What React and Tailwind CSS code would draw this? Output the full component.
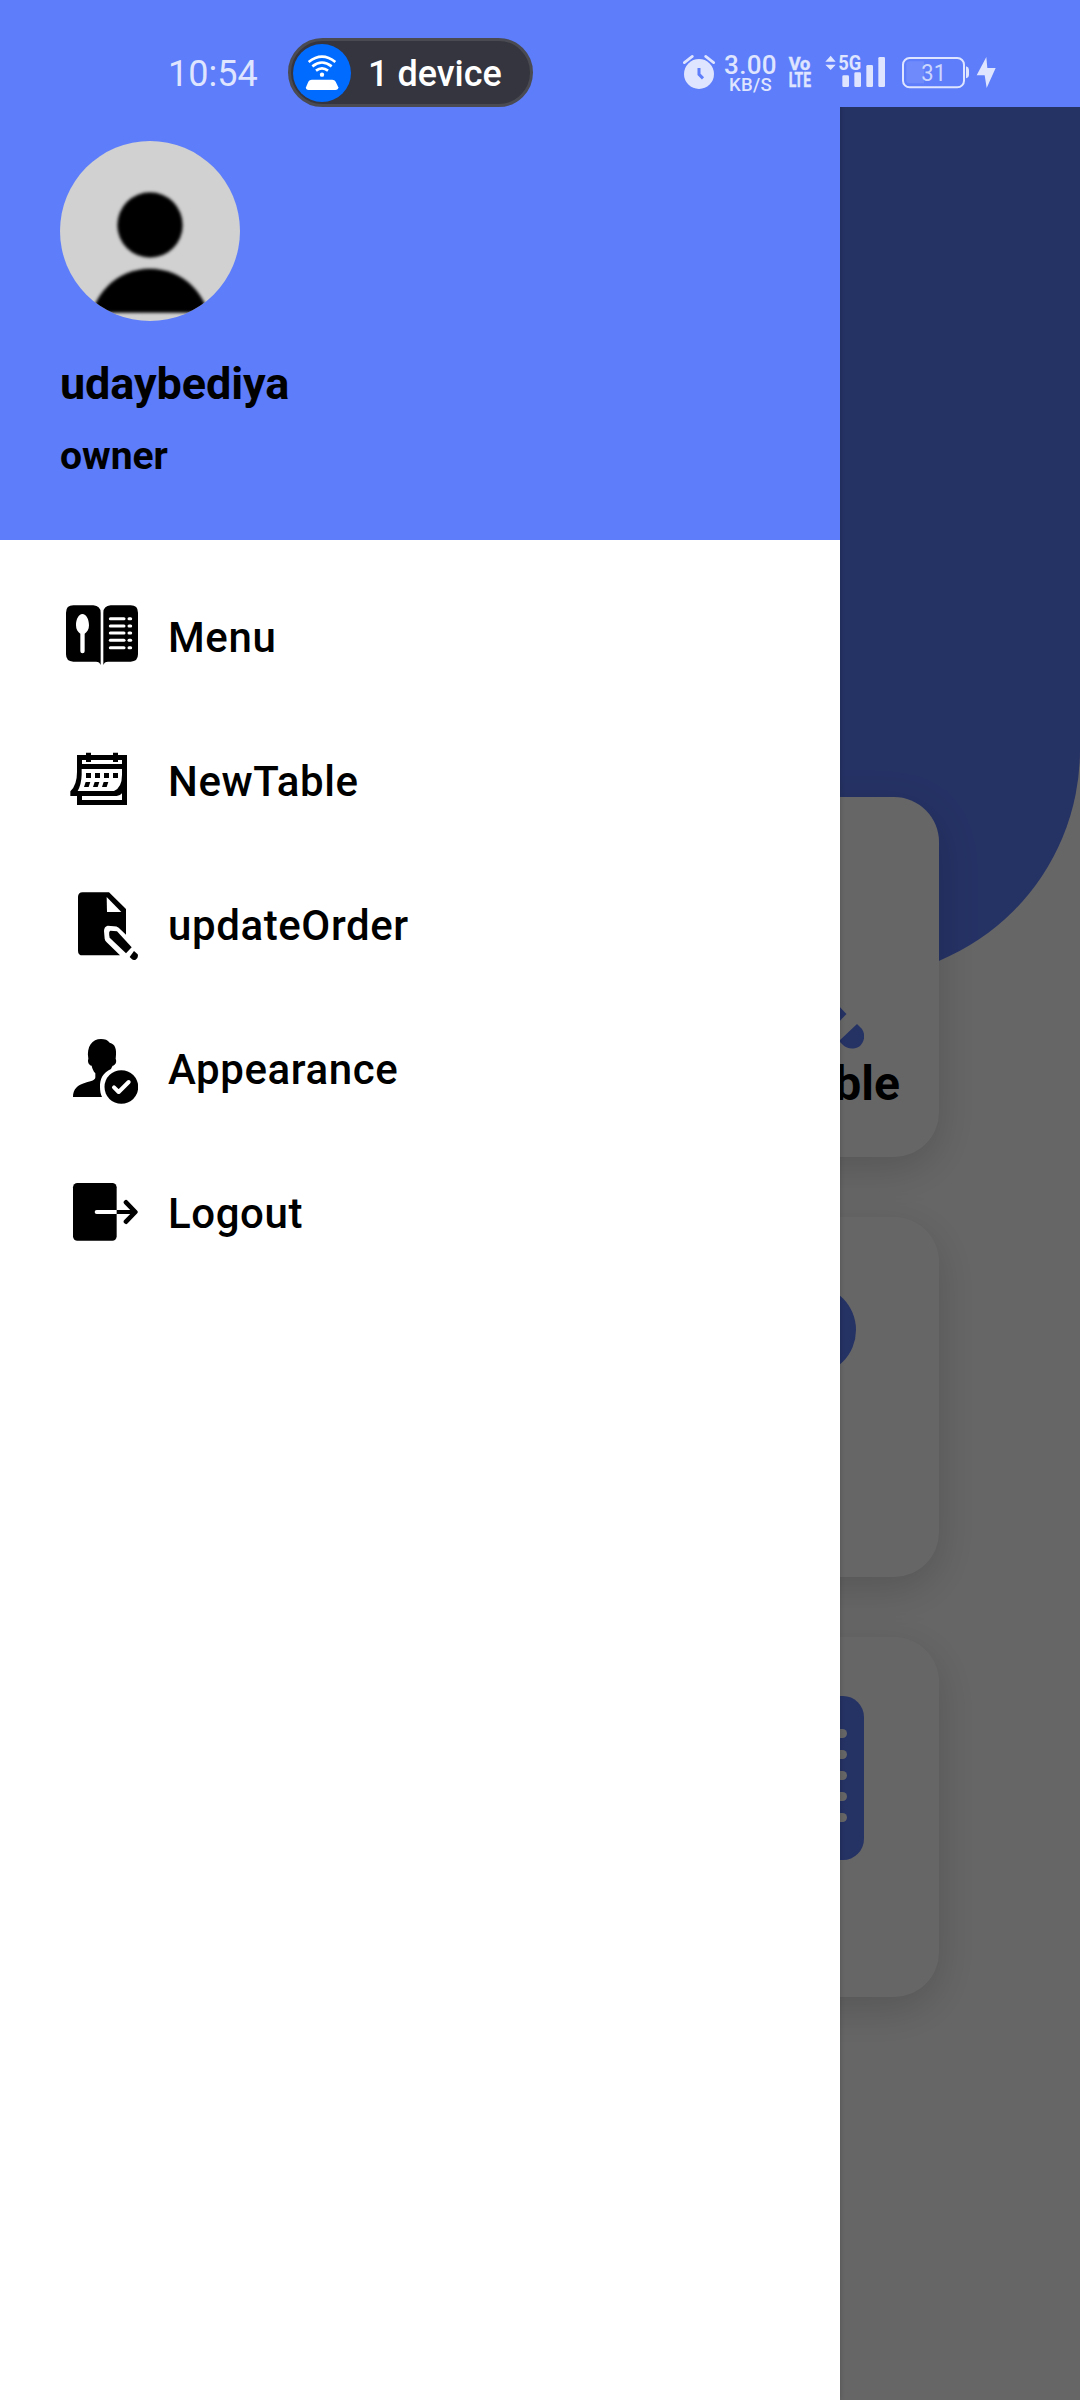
import React from "react";

function Avatar() {
  return (
    <svg className="block size-[180px] rounded-full bg-[#d1d1d1]" viewBox="60 63 540 540">
      <defs>
        <filter id="soft" x="-10%" y="-10%" width="120%" height="120%">
          <feGaussianBlur stdDeviation="4" />
        </filter>
        <clipPath id="bust">
          <rect x="60" y="400" width="540" height="176" />
        </clipPath>
      </defs>
      <g filter="url(#soft)">
        <circle cx="330" cy="315" r="98" />
        <g clipPath="url(#bust)">
          <circle cx="330" cy="627" r="181" />
        </g>
      </g>
    </svg>
  );
}

function MenuBookIcon() {
  return (
    <svg className="size-[72px]" viewBox="78 63 216 216">
      <path d="M100 76H160Q182 78 182 98V255Q179 245 168 245H100Q78 245 78 223V98Q78 76 100 76Z" />
      <path d="M272 76H212Q190 78 190 98V255Q193 245 204 245H272Q294 245 294 223V98Q294 76 272 76Z" />
      <path fill="#fff" d="M127 102C139 102 147 118 147 136C147 149 141 156 134 161V214Q134 220 127.500 220Q121 220 121 214V161C114 156 108 149 108 136C108 118 116 102 127 102Z" />
      <g stroke="#fff" strokeWidth="9" strokeLinecap="round">
        {[116, 138, 159, 181, 203].map((y) => (
          <g key={y}>
            <path d={`M211 ${y}H252`} />
            <path d={`M267 ${y}H272`} />
          </g>
        ))}
      </g>
    </svg>
  );
}

function CalendarIcon() {
  return (
    <svg className="size-[72px]" viewBox="78 495 216 216">
      <path fillRule="evenodd" d="M111 525H138V518H153V525H219V518H234V525H261V675H111V648H91V634Q111 616 111 576ZM126 540V552H246V540H234V546H219V540H153V546H138V540ZM125 567V584Q124 613 113 633H222Q246 622 246 584V567ZM126 648V660H246V640Q240 648 230 648Z" />
      <path d="M138 579H153V594H138ZM165 579H180V594H165ZM192 579H207V594H192ZM219 579H234V594H219ZM137 606H151L146 621H132ZM164 606H178L173 621H159ZM191 606H205L200 621H186Z" />
    </svg>
  );
}

function UpdateIcon() {
  return (
    <svg className="size-[72px]" viewBox="78 87 216 216">
      <path d="M128 97H207L258 147V224L236 203Q230 199 222 199L203 197Q192 200 192 213L194 236Q195 242 200 247L240 286H128Q114 286 114 272V111Q114 97 128 97Z" />
      <path fill="#fff" d="M200 111L244 156H201Z" />
      <path d="M211 212L231 214L275 262L258 280L209 233Q205 214 211 212Z" />
      <path d="M282 273L293 283Q296 293 287 299Q280 301 276 298L269 291Z" />
    </svg>
  );
}

function AppearanceIcon() {
  return (
    <svg className="size-[72px]" viewBox="78 519 216 216">
      <path d="M99 711C99 686 113 675 136 668C155 663 166 661 166 652V640C160 633 157 626 155 617C146 615 142 605 145 596C139 559 157 537 183 537C195 537 203 540 209 548C226 552 231 567 227 596C231 605 227 615 218 617C216 621 214 624 213 627C189 637 179 658 180 681C180 693 182 702 186 711Z" />
      <circle cx="244" cy="681" r="50.500" />
      <path d="M222 682L236 696L266 666" fill="none" stroke="#fff" strokeWidth="12" strokeLinecap="round" strokeLinejoin="round" />
    </svg>
  );
}

function LogoutIcon() {
  return (
    <svg className="size-[72px]" viewBox="78 951 216 216">
      <rect x="99" y="969" width="131" height="173" rx="13" />
      <path d="M170 1056H230" stroke="#fff" strokeWidth="12" strokeLinecap="round" />
      <rect x="230" y="1050" width="50" height="12" />
      <path d="M258 1027L286 1056L258 1085" fill="none" stroke="#000" strokeWidth="14" strokeLinecap="round" strokeLinejoin="round" />
    </svg>
  );
}

const items = [
  { label: "Menu", Icon: MenuBookIcon },
  { label: "NewTable", Icon: CalendarIcon },
  { label: "updateOrder", Icon: UpdateIcon },
  { label: "Appearance", Icon: AppearanceIcon },
  { label: "Logout", Icon: LogoutIcon },
];

function StatusBar() {
  return (
    <header className="z-10 col-start-1 row-start-1 flex h-[107px] self-start bg-[#5d7dfa] pt-[38px]">
      <div className="flex h-[69px] w-[288px] items-center pt-[2px] pl-[168px] text-[36px] text-[#dfe5fe]">10:54</div>
      <div className="flex h-[69px] w-[245px] items-center rounded-full border-[3px] border-[#4a4b52] bg-[#34353e] pl-[2px]">
        <svg className="size-[58px]" viewBox="459 69 174 174">
          <circle cx="546" cy="156" r="87" fill="#006bff" />
          <g fill="none" stroke="#fff" strokeWidth="8">
            <path d="M506 123Q546 91 586 123" />
            <path d="M517 136Q546 113 575 136" />
            <path d="M528 149Q546 135 564 149" />
          </g>
          <circle cx="546" cy="161" r="6.500" fill="#fff" />
          <path fill="#fff" d="M515 176H577Q584 176 587 182L595 199Q595 207 586 207H506Q497 207 498 199L505 182Q508 176 515 176Z" />
        </svg>
        <span className="mt-[2px] ml-[17px] text-[36px] font-medium whitespace-pre text-white">1 device</span>
      </div>
      <div className="ml-[150px] flex h-[69px] text-[#dfe5fe]">
        <svg className="mt-[16px] h-[36px] w-[34px] fill-current" viewBox="69 73 102 108">
          <circle cx="117" cy="133" r="45" />
          <path d="M73 99L97 80M137 80L161 99" stroke="currentColor" strokeWidth="8" strokeLinecap="round" />
          <path d="M117 115V134L129 146" fill="none" stroke="#5d7dfa" strokeWidth="9" />
        </svg>
        <div className="ml-[7px] flex w-[53px] flex-col items-center pt-[15px] leading-none font-medium">
          <span className="text-[26px] leading-[24px] tracking-[0.3px]">3.00</span>
          <span className="text-[18.500px] leading-[17px] tracking-[0.3px]">KB/S</span>
        </div>
        <svg className="mt-[16px] ml-[10px] h-[38px] w-[27px] overflow-visible fill-current font-bold" viewBox="384 72 81 114">
          <g stroke="currentColor" strokeWidth="1.500">
            <text x="389" y="121" fontSize="57" textLength="65" lengthAdjust="spacingAndGlyphs">Vo</text>
            <text x="389" y="171" fontSize="59" textLength="67" lengthAdjust="spacingAndGlyphs">LTE</text>
          </g>
        </svg>
        <svg className="mt-[16px] ml-[10px] h-[38px] w-[64px] overflow-visible fill-current font-bold" viewBox="495 72 192 114">
          <path d="M499 95L515 77L530 95ZM499 104H530L515 120Z" />
          <text x="538" y="121" fontSize="60" textLength="69" lengthAdjust="spacingAndGlyphs">5G</text>
          <rect x="550" y="136" width="20" height="35" rx="4" />
          <rect x="586" y="127" width="20" height="44" rx="4" />
          <rect x="622" y="105" width="20" height="66" rx="4" />
          <rect x="658" y="81" width="20" height="90" rx="4" />
        </svg>
        <svg className="mt-[16px] ml-[13px] h-[38px] w-[98px] fill-current" viewBox="723 72 294 114">
          <rect x="729" y="84" width="183" height="88" rx="20" fill="none" stroke="currentColor" strokeWidth="6" />
          <path d="M748 94H792V160H748Q739 160 739 151V103Q739 94 748 94Z" fill="#6f8bfb" />
          <path d="M918 109Q927 112 927 119V134Q927 142 918 145Z" />
          <text x="784" y="153" fontSize="74" textLength="74" lengthAdjust="spacingAndGlyphs" opacity="0.85">31</text>
          <path d="M979 81L950 136H974L980 174L1007 114H982Z" />
        </svg>
      </div>
    </header>
  );
}

function Card({ children }) {
  return (
    <section className="flex h-[360px] w-[360px] flex-col items-end rounded-[45px] bg-white shadow-[0_12px_42px_rgba(0,0,0,0.16)]">
      {children}
    </section>
  );
}

function Home() {
  return (
    <main className="col-start-1 row-start-1 grid h-[2400px] bg-white">
      <div className="col-start-1 row-start-1 h-[978px] rounded-br-[228px] bg-[#5d7dfa]" />
      <div className="z-[1] col-start-1 row-start-1 flex flex-col items-end gap-[60px] pt-[797px] pr-[141px]">
        <Card>
          <svg className="mt-[204px] mr-[75px] h-[48px] w-[30px] fill-[#5d7dfa]" viewBox="834 1001 30 48">
            <path d="M834 1001L846.500 1014L834 1027Z" />
            <path d="M857 1024L862 1029C866 1035 864 1042 860 1046C854 1050 847 1049 843 1045L839 1041Z" />
          </svg>
          <span className="mt-[7px] mr-[39px] text-[48px] leading-[56px] font-bold">Table</span>
        </Card>
        <Card>
          <div className="mt-[68px] mr-[83px] size-[90px] rounded-full bg-[#5d7dfa]" />
        </Card>
        <Card>
          <div className="mt-[59px] mr-[75px] flex h-[164px] w-[100px] flex-col items-end gap-[12px] rounded-[21px] bg-[#5d7dfa] pt-[33px] pr-[17px]">
            {[0, 1, 2, 3, 4].map((n) => (
              <span key={n} className="h-[9px] w-[30px] rounded-full bg-white" />
            ))}
          </div>
        </Card>
      </div>
      <div className="z-[2] col-start-1 row-start-1 bg-black/60" />
    </main>
  );
}

function Drawer() {
  return (
    <aside className="z-[5] col-start-1 row-start-1 h-[2400px] w-[840px] bg-white shadow-[0_0_5px_rgba(0,0,0,0.2)]">
      <div className="h-[540px] bg-[#5d7dfa] pt-[141px] pl-[60px] font-bold">
        <Avatar />
        <p className="mt-[36px] text-[45px] leading-[54px] tracking-[-0.1px]">udaybediya</p>
        <p className="mt-[21px] text-[39px] leading-[48px]">owner</p>
      </div>
      <nav className="pt-[25px]">
        {items.map(({ label, Icon }) => (
          <a key={label} className="flex h-[144px] items-center gap-[30px] pl-[66px] text-[42px] font-medium tracking-[0.600px]">
            <Icon />
            {label}
          </a>
        ))}
      </nav>
    </aside>
  );
}

export default function App() {
  return (
    <div className="grid h-[2400px] w-[1080px] overflow-hidden font-[Roboto,sans-serif] text-black">
      <Home />
      <Drawer />
      <StatusBar />
    </div>
  );
}
